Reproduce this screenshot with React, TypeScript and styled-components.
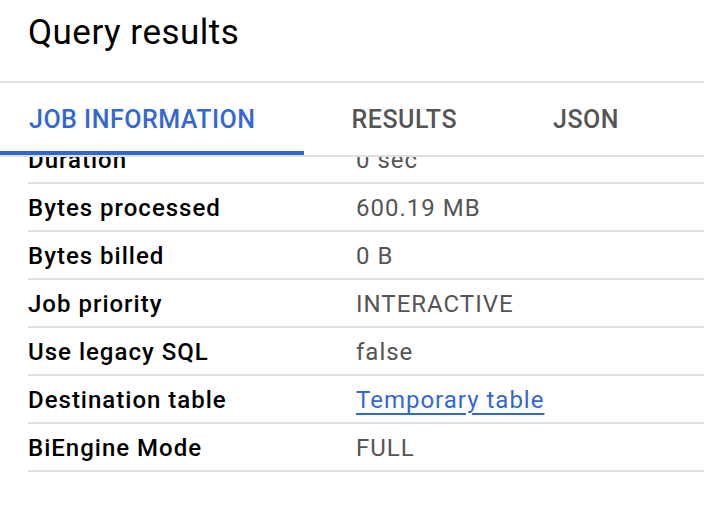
import React from "react";
import styled, { createGlobalStyle } from "styled-components";

const Global = createGlobalStyle`
  html, body { margin: 0; padding: 0; background: #fff; }
  body { font-family: Roboto, "Noto Sans", Arial, sans-serif; -webkit-font-smoothing: antialiased; }
`;

const Page = styled.div`
  width: 704px;
  height: 506px;
  overflow: hidden;
  display: flex;
  flex-direction: column;
  background: #fff;
`;

const Header = styled.div`
  height: 83px;
  padding: 13px 28px 0;
  box-sizing: border-box;
  border-bottom: 2px solid #e0e0e0;
  font-size: 35px;
  line-height: 40px;
  letter-spacing: 0.5px;
  color: #000;
  flex: none;
`;

const TabBar = styled.div`
  display: flex;
  height: 74px;
  box-sizing: border-box;
  border-bottom: 2px solid #e0e0e0;
  flex: none;
`;

const Tab = styled.div<{ $active?: boolean; $first?: boolean }>`
  position: relative;
  padding: 0 48px 0 ${(p) => (p.$first ? "29px" : "48px")};
  height: 72px;
  line-height: 73px;
  font-size: 25px;
  font-weight: 500;
  letter-spacing: 0.5px;
  color: ${(p) => (p.$active ? "#3367d6" : "#555")};
  &::after {
    content: "";
    display: ${(p) => (p.$active ? "block" : "none")};
    position: absolute;
    left: 0;
    right: 0;
    bottom: 0;
    height: 4px;
    background: #3367d6;
  }
`;

const Scroll = styled.div`
  flex: 1;
  overflow: hidden;
`;

const Table = styled.div`
  margin: -21px 0 0 28px;
`;

const Row = styled.div`
  display: grid;
  grid-template-columns: 328px 1fr;
  align-items: center;
  height: 48px;
  box-sizing: border-box;
  border-bottom: 2px solid #e0e0e0;
  font-size: 24px;
  letter-spacing: 1px;
  line-height: 28px;
  padding-top: 1px;
`;

const Label = styled.div`
  font-weight: 500;
  color: #000;
`;

const Value = styled.div`
  color: #555;
`;

const Link = styled.a`
  color: #3367d6;
  text-decoration: underline;
  text-decoration-thickness: 2px;
  text-underline-offset: 5px;
`;

const rows: [string, React.ReactNode][] = [
  ["Duration", "0 sec"],
  ["Bytes processed", "600.19 MB"],
  ["Bytes billed", "0 B"],
  ["Job priority", "INTERACTIVE"],
  ["Use legacy SQL", "false"],
  ["Destination table", <Link>Temporary table</Link>],
  ["BiEngine Mode", "FULL"],
];

export default function App() {
  return (
    <Page>
      <Global />
      <Header>Query results</Header>
      <TabBar>
        <Tab $active $first>JOB INFORMATION</Tab>
        <Tab>RESULTS</Tab>
        <Tab>JSON</Tab>
      </TabBar>
      <Scroll>
        <Table>
          {rows.map(([l, v]) => (
            <Row key={l}>
              <Label>{l}</Label>
              <Value>{v}</Value>
            </Row>
          ))}
        </Table>
      </Scroll>
    </Page>
  );
}
